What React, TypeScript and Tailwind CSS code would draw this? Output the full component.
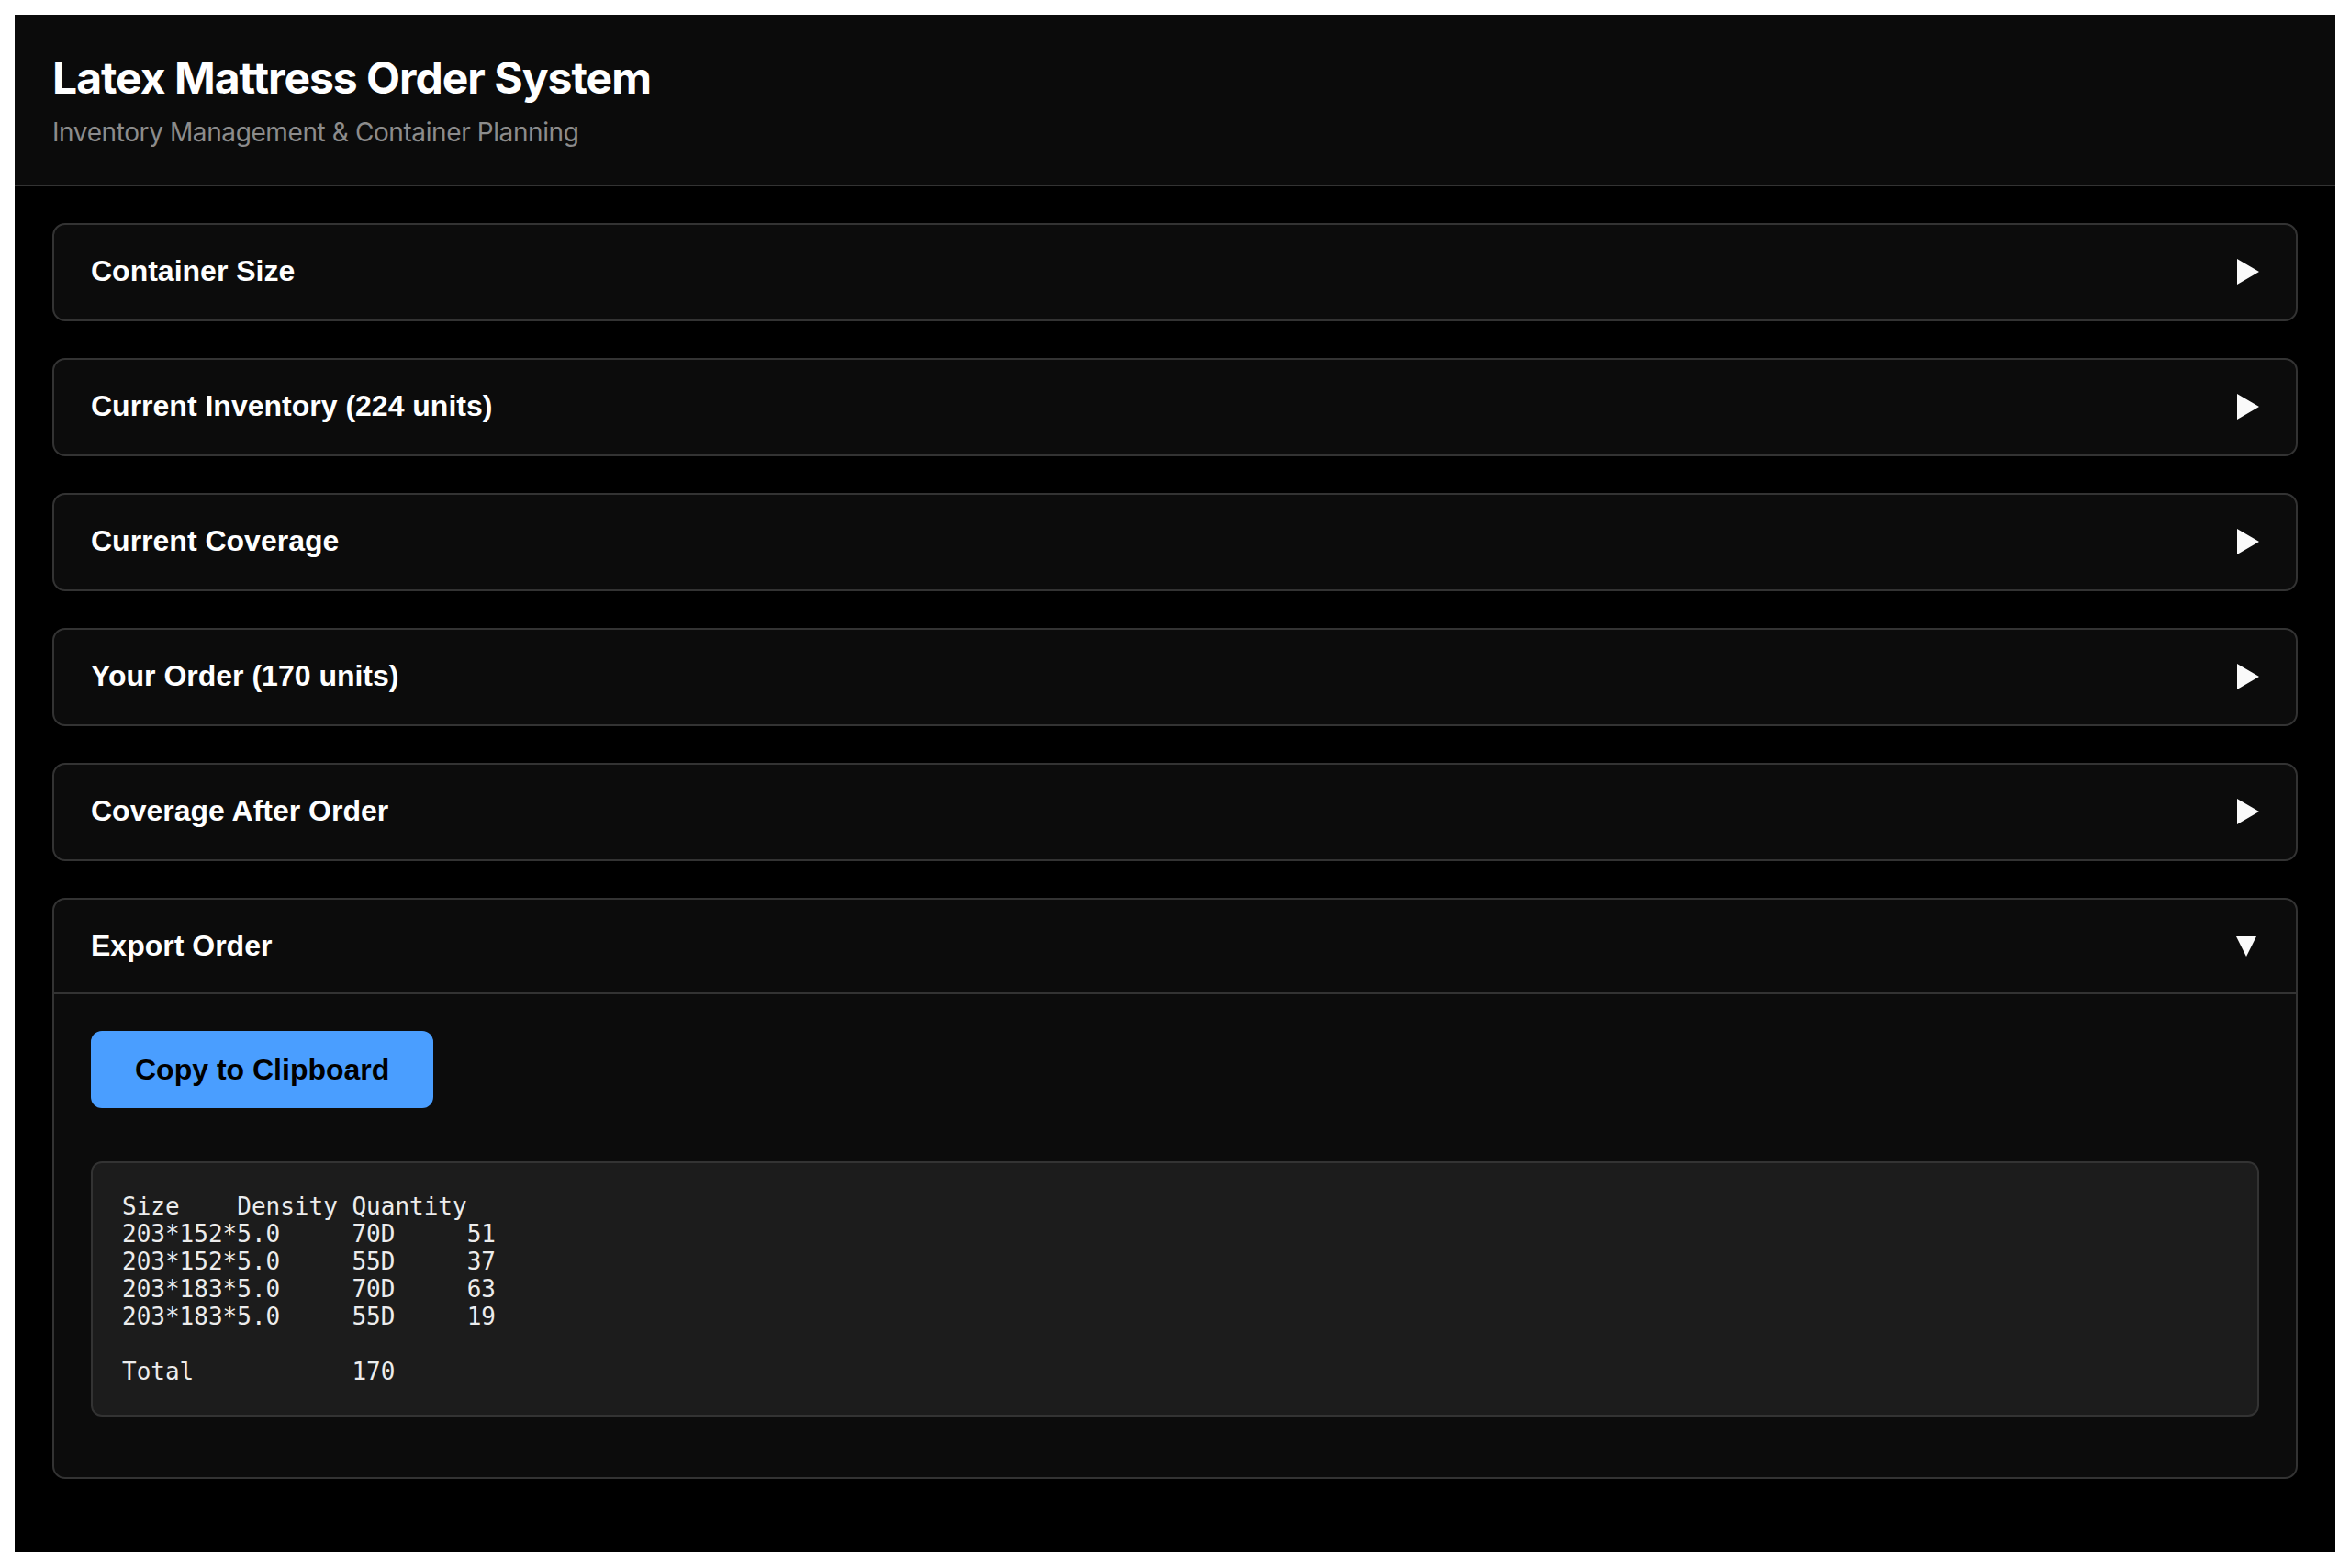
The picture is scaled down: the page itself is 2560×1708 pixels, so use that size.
import { useState } from "react";

const sections = [
  "Container Size",
  "Current Inventory (224 units)",
  "Current Coverage",
  "Your Order (170 units)",
  "Coverage After Order",
  "Export Order",
];

const orderText = [
  "Size\tDensity\tQuantity",
  "203*152*5.0\t70D\t51",
  "203*152*5.0\t55D\t37",
  "203*183*5.0\t70D\t63",
  "203*183*5.0\t55D\t19",
  "",
  "Total\t\t170",
].join("\n");

function Arrow({ open }: { open: boolean }) {
  return open ? (
    <svg width="22" height="22" viewBox="0 0 22 22" className="mr-[3px]">
      <path d="M0 0H22L11 22Z" fill="#fafafa" />
    </svg>
  ) : (
    <svg width="24" height="28" viewBox="0 0 24 28">
      <path d="M0 0L24 14L0 28Z" fill="#fafafa" />
    </svg>
  );
}

export default function App() {
  const [open, setOpen] = useState<string | null>("Export Order");

  return (
    <div className="bg-white p-4">
      <div className="bg-black text-white">
        <header className="bg-[#0b0b0b] border-b-2 border-[#333] px-[41px] pt-[40px] pb-[40px]">
          <h1 className="text-[48px] font-bold leading-[58px] tracking-[-1px] font-['Inter',sans-serif]">
            Latex Mattress Order System
          </h1>
          <p className="mt-[13px] text-[28px] leading-[34px] tracking-[-0.4px] text-[#8c8c8c] font-['Inter',sans-serif]">
            Inventory Management &amp; Container Planning
          </p>
        </header>

        <main className="px-[41px] pt-[40px] pb-[40px]">
          {sections.map((title) => {
            const isOpen = open === title;
            return (
              <div
                key={title}
                className="mb-[40px] rounded-[14px] border-2 border-[#333] bg-[#0c0c0c]"
              >
                <button
                  onClick={() => setOpen(isOpen ? null : title)}
                  className={
                    "flex w-full items-center justify-between px-[40px] py-[32px] border-b-2 " +
                    (isOpen ? "border-[#333]" : "border-transparent")
                  }
                >
                  <span className="text-[32px] leading-[37px] font-bold text-white font-['Liberation_Sans',Arial,sans-serif]">
                    {title}
                  </span>
                  <Arrow open={isOpen} />
                </button>
                {isOpen && title === "Export Order" && (
                  <div className="px-[40px] pt-[40px] pb-[66px]">
                    <button className="rounded-[12px] bg-[#4a9eff] px-[48px] py-[24px] text-[32px] leading-[36px] font-bold text-black font-['Liberation_Sans',Arial,sans-serif]">
                      Copy to Clipboard
                    </button>
                    <pre className="mt-[58px] rounded-[12px] border-2 border-[#333] bg-[#1c1c1c] px-[32px] py-[32px] text-[26px] leading-[30px] [tab-size:8] text-[#ececec] font-['DejaVu_Sans_Mono',monospace]">
                      {orderText}
                    </pre>
                  </div>
                )}
              </div>
            );
          })}
        </main>
      </div>
    </div>
  );
}
